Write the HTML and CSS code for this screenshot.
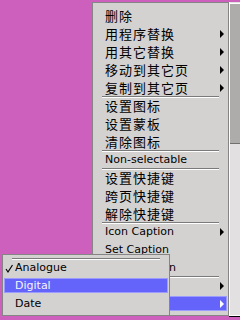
FILE: index.html
```html
<!DOCTYPE html>
<html lang="zh">
<head>
    <meta charset="UTF-8">
    <meta name="viewport" content="width=device-width, initial-scale=1.0">
    <title>Icon Menu</title>
    <link rel="stylesheet" href="styles.css">
</head>
<body>
    <div class="screen">
        <div class="popup">
            <ul class="menu">
                <li class="item zh"><span class="label">删除</span></li>
                <li class="item zh sub"><span class="label">用程序替换</span></li>
                <li class="item zh sub"><span class="label">用其它替换</span></li>
                <li class="item zh sub"><span class="label">移动到其它页</span></li>
                <li class="item zh sub"><span class="label">复制到其它页</span></li>
                <li class="item zh sep"><span class="label">设置图标</span></li>
                <li class="item zh"><span class="label">设置蒙板</span></li>
                <li class="item zh"><span class="label">清除图标</span></li>
                <li class="item sep"><span class="label">Non-selectable</span></li>
                <li class="item zh sep"><span class="label">设置快捷键</span></li>
                <li class="item zh"><span class="label">跨页快捷键</span></li>
                <li class="item zh"><span class="label">解除快捷键</span></li>
                <li class="item sep sub"><span class="label">Icon Caption</span></li>
                <li class="item"><span class="label">Set Caption</span></li>
                <li class="item"><span class="label">Hide Caption</span></li>
                <li class="item sep sub"><span class="label">Font</span></li>
                <li class="item sub active"><span class="label">Clock</span></li>
            </ul>
            <div class="scrollbar">
                <div class="thumb"></div>
            </div>
        </div>

        <!-- submenu of "Clock" -->
        <ul class="menu submenu">
            <li class="item sep checked">
                <span class="label">
                    <svg class="check" width="10" height="13" viewBox="0 0 10 13">
                        <polyline points="1,8 3,11 7.5,4" fill="none" stroke="#000" stroke-width="1.2"/>
                    </svg>Analogue
                </span>
            </li>
            <li class="item active"><span class="label">Digital</span></li>
            <li class="item"><span class="label">Date</span></li>
        </ul>
    </div>
</body>
</html>
```

FILE: styles.css
```css
* {
    margin: 0;
    padding: 0;
    box-sizing: border-box;
}

body {
    background: #cc60bc;
    width: 240px;
    height: 320px;
    overflow: hidden;
    font-family: 'DejaVu Sans', 'Noto Sans CJK SC', sans-serif;
    font-size: 11px;
    color: #000;
}

.screen {
    position: relative;
    width: 240px;
    height: 320px;
}

.popup {
    position: absolute;
    left: 92px;
    top: 2px;
    display: flex;
}

.menu {
    list-style: none;
    background: #d4d1d1;
    border: 1px solid #858585;
    padding: 2px 0 4px;
}

.popup .menu {
    width: 137px;
}

.submenu {
    position: absolute;
    left: 2px;
    top: 254px;
    width: 168px;
}

.item {
    height: 18px;
    padding: 3px 1px 0;
}

.item .label {
    display: flex;
    align-items: center;
    height: 15px;
    padding: 0 2px 0 10px;
    border: 1px solid transparent;
    white-space: nowrap;
    line-height: 13px;
}

.zh .label {
    font-family: 'Noto Sans CJK SC', sans-serif;
    font-size: 13px;
    letter-spacing: 1px;
}

.sep {
    background:
        linear-gradient(#7a7a7a, #7a7a7a) 9px 1px / calc(100% - 18px) 1px no-repeat,
        linear-gradient(#fff, #fff) 9px 2px / calc(100% - 18px) 1px no-repeat;
}

.sub .label::after {
    content: '';
    margin-left: auto;
    border-left: 4px solid #000;
    border-top: 4px solid transparent;
    border-bottom: 4px solid transparent;
}

.item.active .label {
    background: #6464fa;
    border-color: #9c9cff;
    color: #f4f4ff;
}

.item.active.sub .label::after {
    border-left-color: #fff;
}

.checked .label {
    padding-left: 0;
}

.check {
    flex: none;
}

.scrollbar {
    width: 11px;
    background: #e2e0e0;
    border-left: 1px solid #fff;
    border-bottom: 1px solid #fff;
    box-shadow: 0 1px 0 #000;
}

.thumb {
    height: 141px;
    margin-top: 1px;
    background: #aeabab;
    border-top: 1px solid #fff;
    border-bottom: 1px solid #707070;
}
```
